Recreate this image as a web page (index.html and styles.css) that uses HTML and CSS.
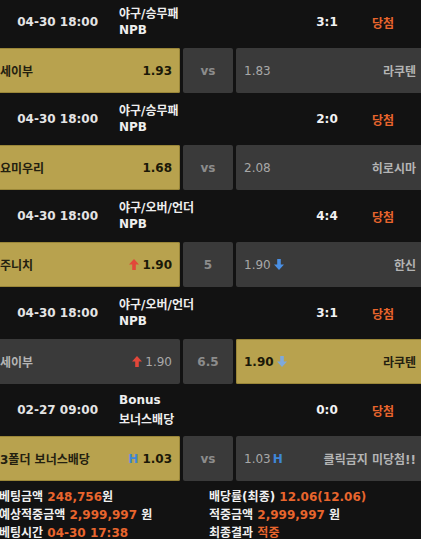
FILE: index.html
```html
<!DOCTYPE html>
<html lang="ko">
<head>
<meta charset="utf-8">
<title>베팅내역</title>
<link rel="stylesheet" href="styles.css">
</head>
<body>
<div class="list">
  <section class="game">
    <div class="game-head">
      <div class="game-time">04-30 18:00</div>
      <div class="game-cat"><span>야구/승무패</span><span>NPB</span></div>
      <div class="game-score">3:1</div>
      <div class="game-result">당첨</div>
    </div>
    <div class="bet-row">
      <div class="pick is-selected"><span class="team">세이부</span><span class="odds">1.93</span></div>
      <div class="pick-mid">vs</div>
      <div class="pick"><span class="odds">1.83</span><span class="team">라쿠텐</span></div>
    </div>
  </section>

  <section class="game">
    <div class="game-head">
      <div class="game-time">04-30 18:00</div>
      <div class="game-cat"><span>야구/승무패</span><span>NPB</span></div>
      <div class="game-score">2:0</div>
      <div class="game-result">당첨</div>
    </div>
    <div class="bet-row">
      <div class="pick is-selected"><span class="team">요미우리</span><span class="odds">1.68</span></div>
      <div class="pick-mid">vs</div>
      <div class="pick"><span class="odds">2.08</span><span class="team">히로시마</span></div>
    </div>
  </section>

  <section class="game">
    <div class="game-head">
      <div class="game-time">04-30 18:00</div>
      <div class="game-cat"><span>야구/오버/언더</span><span>NPB</span></div>
      <div class="game-score">4:4</div>
      <div class="game-result">당첨</div>
    </div>
    <div class="bet-row">
      <div class="pick is-selected"><span class="team">주니치</span><span class="odds"><svg class="arrow up" viewBox="0 0 10 11"><path d="M5 0 L10 5.5 H6.8 V11 H3.2 V5.5 H0 Z"/></svg>1.90</span></div>
      <div class="pick-mid">5</div>
      <div class="pick"><span class="odds">1.90<svg class="arrow down" viewBox="0 0 10 11"><path d="M5 11 L10 5.5 H6.8 V0 H3.2 V5.5 H0 Z"/></svg></span><span class="team">한신</span></div>
    </div>
  </section>

  <section class="game">
    <div class="game-head">
      <div class="game-time">04-30 18:00</div>
      <div class="game-cat"><span>야구/오버/언더</span><span>NPB</span></div>
      <div class="game-score">3:1</div>
      <div class="game-result">당첨</div>
    </div>
    <div class="bet-row">
      <div class="pick"><span class="team">세이부</span><span class="odds"><svg class="arrow up" viewBox="0 0 10 11"><path d="M5 0 L10 5.5 H6.8 V11 H3.2 V5.5 H0 Z"/></svg>1.90</span></div>
      <div class="pick-mid">6.5</div>
      <div class="pick is-selected"><span class="odds">1.90<svg class="arrow down faint" viewBox="0 0 10 11"><path d="M5 11 L10 5.5 H6.8 V0 H3.2 V5.5 H0 Z"/></svg></span><span class="team">라쿠텐</span></div>
    </div>
  </section>

  <section class="game">
    <div class="game-head">
      <div class="game-time">02-27 09:00</div>
      <div class="game-cat game-cat--loose"><span>Bonus</span><span>보너스배당</span></div>
      <div class="game-score">0:0</div>
      <div class="game-result">당첨</div>
    </div>
    <div class="bet-row">
      <div class="pick is-selected"><span class="team">3폴더 보너스배당</span><span class="odds"><span class="mark-h">H</span>1.03</span></div>
      <div class="pick-mid">vs</div>
      <div class="pick"><span class="odds">1.03 <span class="mark-h">H</span></span><span class="team">클릭금지 미당첨!!</span></div>
    </div>
  </section>
</div>

<div class="summary">
  <div class="summary-col">
    <p>베팅금액 <em>248,756</em>원</p>
    <p>예상적중금액 <em>2,999,997</em> 원</p>
    <p>베팅시간 <em>04-30 17:38</em></p>
  </div>
  <div class="summary-col">
    <p>배당률(최종) <em>12.06(12.06)</em></p>
    <p>적중금액 <em>2,999,997</em> 원</p>
    <p>최종결과 <em>적중</em></p>
  </div>
</div>
</body>
</html>
```
FILE: styles.css
```css
html, body {
  margin: 0;
  padding: 0;
  background: #121212;
  overflow: hidden;
}
body {
  font-family: "DejaVu Sans", "Noto Sans CJK KR", sans-serif;
  font-size: 12px;
  font-weight: bold;
  color: #e8e8e8;
}
.list {
  width: 432px;
  margin: -4px 0 0 -8px;
}
.game-head {
  height: 52px;
  display: flex;
  align-items: center;
  padding-right: 13px;
}
.game-time {
  width: 127px;
  box-sizing: border-box;
  padding-right: 21px;
  text-align: right;
  color: #e4e4e4;
  white-space: nowrap;
}
.game-cat {
  flex: 1;
  display: flex;
  flex-direction: column;
  line-height: 16px;
  color: #eeeeee;
}
.game-cat--loose {
  line-height: 20px;
}
.game-score {
  width: 56px;
  text-align: center;
  color: #f2f2f2;
}
.game-result {
  width: 56px;
  text-align: center;
  color: #e8652d;
}
.bet-row {
  display: grid;
  grid-template-columns: 188px 50px 188px;
  column-gap: 3px;
  height: 45px;
}
.pick {
  display: flex;
  align-items: center;
  justify-content: space-between;
  padding: 0 8px;
  background: #3a3a3a;
  border-radius: 2px;
  color: #b4b4b4;
  white-space: nowrap;
}
.pick .odds {
  display: flex;
  align-items: center;
  font-weight: normal;
  color: #a8a8a8;
}
.pick.is-selected {
  background: #b8a24e;
  box-shadow: inset 0 0 0 1px #9a8638;
  color: #232010;
}
.pick.is-selected .odds {
  font-weight: bold;
  color: #1a1808;
}
.pick-mid {
  display: flex;
  align-items: center;
  justify-content: center;
  background: #3a3a3a;
  border-radius: 2px;
  color: #8c8c8c;
}
.arrow {
  width: 10px;
  height: 11px;
  margin: 0 3px;
}
.arrow.up path { fill: #e2473a; }
.arrow.down path { fill: #4a8fe4; }
.arrow.faint path { fill: #7ea9dc; }
.mark-h {
  color: #3f86d8;
  font-weight: bold;
  margin-right: 4px;
}
.pick .odds .mark-h { margin: 0 0 0 2px; }
.pick.is-selected .odds .mark-h { margin: 0 4px 0 0; }
.summary {
  display: grid;
  grid-template-columns: 209px 212px;
  padding-top: 7px;
}
.summary-col {
  padding-left: 0;
}
.summary-col:first-child {
  margin-left: -1px;
}
.summary p {
  margin: 0;
  line-height: 18px;
  color: #f0f0f0;
  white-space: nowrap;
}
.summary em {
  font-style: normal;
  color: #e8652d;
}
```
